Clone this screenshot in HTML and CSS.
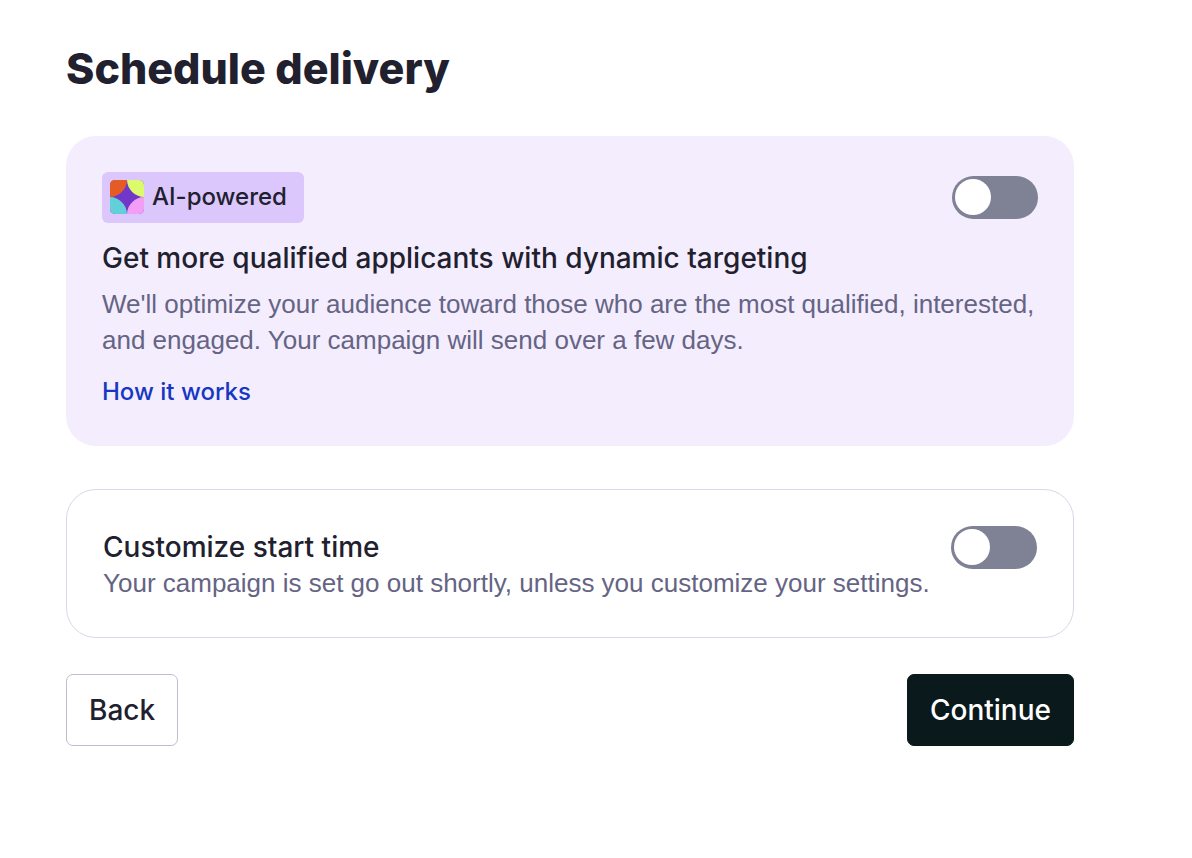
FILE: index.html
```html
<!DOCTYPE html>
<html lang="en">
<head>
    <meta charset="UTF-8">
    <meta name="viewport" content="width=device-width, initial-scale=1.0">
    <title>Schedule delivery</title>
    <link rel="stylesheet" href="styles.css">
</head>
<body>
    <main class="page">
        <h1>Schedule delivery</h1>

        <section class="card card-ai">
            <div class="card-top">
                <span class="badge">
                    <svg class="badge-icon" viewBox="0 0 34 34" aria-hidden="true">
                        <defs>
                            <clipPath id="tile"><rect width="34" height="34" rx="5"/></clipPath>
                        </defs>
                        <g clip-path="url(#tile)">
                            <rect width="34" height="34" fill="#7137c8"/>
                            <path d="M0 0H17C17 9 9 17 0 17Z" fill="#e55b26"/>
                            <path d="M34 0H17C17 9 25 17 34 17Z" fill="#dcfa6e"/>
                            <path d="M0 34H17C17 25 9 17 0 17Z" fill="#62cfd9"/>
                            <path d="M34 34H17C17 25 25 17 34 17Z" fill="#f29df6"/>
                        </g>
                    </svg>
                    AI-powered
                </span>
                <input type="checkbox" role="switch" class="toggle" id="targeting">
            </div>
            <h2><label for="targeting">Get more qualified applicants with dynamic targeting</label></h2>
            <p class="ai-text">We'll optimize your audience toward those who are the most qualified, interested, and engaged. Your campaign will send over a few days.</p>
            <a href="#" class="link">How it works</a>
        </section>

        <section class="card card-time">
            <div class="time-text">
                <h2><label for="start-time">Customize start time</label></h2>
                <p>Your campaign is set go out shortly, unless you customize your settings.</p>
            </div>
            <input type="checkbox" role="switch" class="toggle" id="start-time">
        </section>

        <div class="actions">
            <button type="button" class="btn">Back</button>
            <button type="button" class="btn btn-primary">Continue</button>
        </div>
    </main>
</body>
</html>
```
FILE: styles.css
```css
* { margin: 0; padding: 0; box-sizing: border-box; }
body {
    font-family: Inter, "Liberation Sans", sans-serif;
    background: #fff;
    color: #21202e;
}
.page {
    padding: 40px 118px 40px 66px;
}
h1 {
    font-size: 43px;
    line-height: 56px;
    font-weight: 800;
    margin-bottom: 40px;
}
h2 {
    font-size: 28px;
    line-height: 36px;
    font-weight: 500;
}
p {
    font-family: "Liberation Sans", sans-serif;
    font-size: 26px;
    line-height: 36px;
    color: #656484;
}
.card {
    padding: 36px;
    border-radius: 30px;
}
.card-ai {
    background: #f4edfe;
    margin-bottom: 43px;
}
.card-top {
    display: flex;
    justify-content: space-between;
    align-items: center;
    margin-bottom: 17px;
}
.badge {
    display: flex;
    align-items: center;
    gap: 8px;
    padding: 8px 17px 9px 8px;
    border-radius: 6px;
    background: #dbc7fc;
    font-size: 24px;
    line-height: 34px;
    font-weight: 500;
}
.badge-icon {
    width: 34px;
    height: 34px;
}
.ai-text {
    margin: 10px 0 16px;
}
.link {
    display: block;
    width: fit-content;
    font-size: 24px;
    line-height: 36px;
    font-weight: 500;
    color: #1437c4;
    text-decoration: none;
}
.toggle {
    appearance: none;
    flex: none;
    width: 86px;
    height: 43px;
    padding: 3px;
    border-radius: 22px;
    background: #7f8194;
    cursor: pointer;
}
.toggle::before {
    content: "";
    display: block;
    width: 36px;
    height: 36px;
    border-radius: 50%;
    background: #fff;
}
.toggle:checked {
    background: #1437c4;
}
.toggle:checked::before {
    margin-left: auto;
}
.card-time {
    display: flex;
    justify-content: space-between;
    align-items: flex-start;
    border: 1px solid #d9d7e8;
    margin-bottom: 36px;
}
.time-text {
    padding-top: 3px;
}
.actions {
    display: flex;
    justify-content: space-between;
}
.btn {
    font-family: inherit;
    font-size: 28px;
    line-height: 36px;
    font-weight: 500;
    padding: 17px 22px;
    border: 1px solid #bfbdd2;
    border-radius: 7px;
    background: #fff;
    color: #21202e;
    cursor: pointer;
}
.btn-primary {
    background: #09191c;
    border-color: #09191c;
    color: #fff;
}
```
